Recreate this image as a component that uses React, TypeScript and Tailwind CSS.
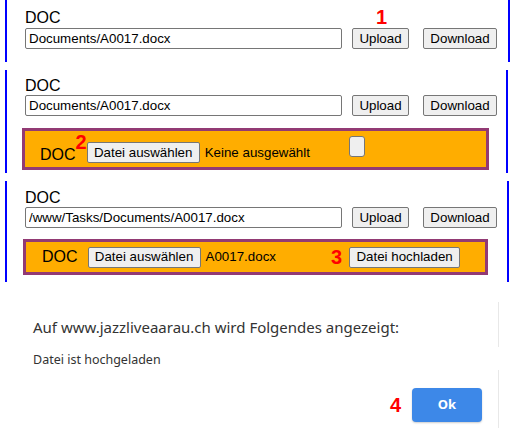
import React from 'react';

const btn =
  'h-[21px] px-[6px] bg-[#efefef] border border-[#767676] rounded-[2px] text-[13.33px] leading-none text-black';
const input =
  'h-[21px] px-[3px] border border-[#767676] rounded-[2px] text-[13.33px] text-black bg-white outline-none';

function PathRow({ value }: { value: string }) {
  return (
    <div className="flex items-center">
      <input className={`${input} w-[317px]`} defaultValue={value} readOnly />
      <button className={`${btn} ml-[10px] w-[57px]`}>Upload</button>
      <button className={`${btn} ml-[14px] w-[74px]`}>Download</button>
    </div>
  );
}

function App() {
  return (
    <div className="w-[517px] h-[428px] bg-white overflow-hidden font-['Liberation_Sans',Arial,sans-serif] text-black">
      {/* Panel 1 */}
      <div className="ml-[5px] w-[505px] h-[62px] border-x-2 border-[#0000ff] pl-[18px] pt-[8px]">
        <div className="text-[16px] leading-[20px]">DOC</div>
        <div className="relative">
          <PathRow value="Documents/A0017.docx" />
          <span className="absolute left-[351px] top-[-21px] text-[20px] font-bold leading-none text-[#ff0000]">1</span>
        </div>
      </div>

      {/* Panel 2 */}
      <div className="mt-[8px] ml-[5px] w-[503px] h-[103px] border-x-2 border-[#0000ff] pt-[6px]">
        <div className="pl-[18px]">
          <div className="text-[16px] leading-[19px]">DOC</div>
          <PathRow value="Documents/A0017.docx" />
        </div>
        <div className="mt-[12px] ml-[15px] w-[467px] h-[42px] border-[3px] border-[#923a74] bg-[#ffad00] flex items-start pl-[15px]">
          <span className="mt-[14px] text-[16px] leading-[20px]">DOC</span>
          <span className="mt-[1px] text-[20px] font-bold leading-none text-[#ff0000]">2</span>
          <button className={`${btn} mt-[11px] w-[113px]`}>Datei auswählen</button>
          <span className="mt-[14px] ml-[5px] text-[13.33px] leading-[16px]">Keine ausgewählt</span>
          <div className="mt-[5px] ml-[39px] w-[16px] h-[21px] bg-[#efefef] border border-[#767676] rounded-[3px]" />
        </div>
      </div>

      {/* Panel 3 */}
      <div className="mt-[8px] ml-[5px] w-[504px] h-[101px] border-x-2 border-[#0000ff] pt-[7px]">
        <div className="pl-[18px]">
          <div className="text-[16px] leading-[19px]">DOC</div>
          <PathRow value="/www/Tasks/Documents/A0017.docx" />
        </div>
        <div className="mt-[11px] ml-[16px] w-[465px] h-[36px] border-[3px] border-[#923a74] bg-[#ffad00] flex items-center pl-[16px]">
          <span className="text-[16px] leading-[20px]">DOC</span>
          <button className={`${btn} ml-[10px] w-[113px]`}>Datei auswählen</button>
          <span className="ml-[5px] text-[13.33px]">A0017.docx</span>
          <span className="ml-[55px] text-[20px] font-bold leading-none text-[#ff0000]">3</span>
          <button className={`${btn} ml-[7px] w-[111px]`}>Datei hochladen</button>
        </div>
      </div>

      {/* Alert dialog */}
      <div className="mt-[8px] flex h-[138px] font-['Noto_Sans','Open_Sans',sans-serif]">
        <div className="w-[498px] pl-[33px] pt-[27px] flex flex-col">
          <div className="text-[15px] leading-[20px] text-[#333333]">
            Auf www.jazzliveaarau.ch wird Folgendes angezeigt:
          </div>
          <div className="mt-[15px] text-[12.5px] leading-[16px] text-[#333333]">Datei ist hochgeladen</div>
          <div className="mt-[20px] flex items-center justify-end pr-[16px]">
            <span className="text-[20px] font-bold leading-none text-[#ff0000] font-['Liberation_Sans',Arial,sans-serif]">4</span>
            <button className="ml-[11px] w-[70px] h-[34px] rounded-[4px] bg-[#3d88e8] text-white text-[13px] font-bold shadow-[0_1px_2px_rgba(0,0,0,0.2)]">
              Ok
            </button>
          </div>
        </div>
        <div className="flex flex-col w-px">
          <div className="mt-[12px] h-[45px] bg-[#e8e8e8]" />
          <div className="mt-[23px] flex-1 bg-[#e8e8e8]" />
        </div>
      </div>
    </div>
  );
}

export default App;
